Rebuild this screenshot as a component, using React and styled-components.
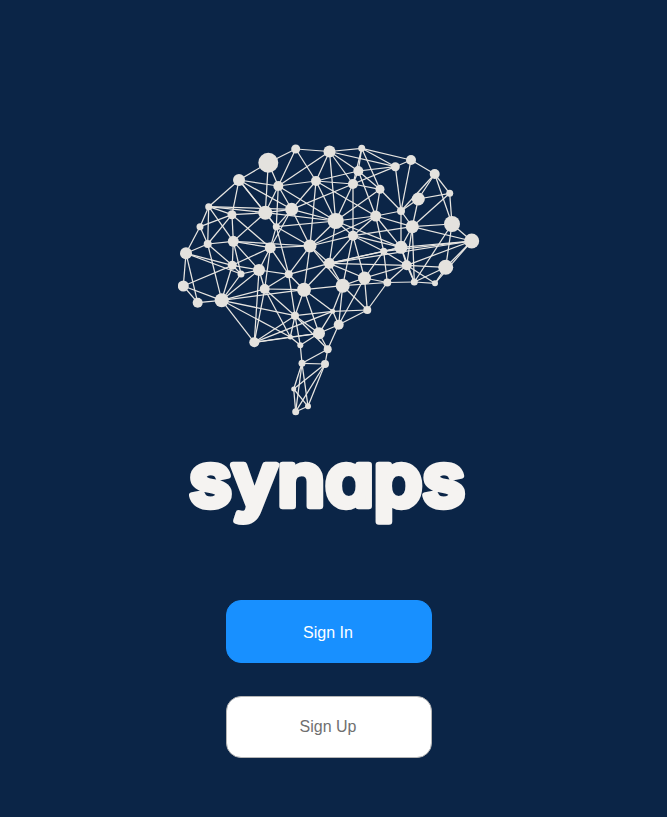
import React from 'react';
import styled, { createGlobalStyle } from 'styled-components';

const GlobalStyle = createGlobalStyle`
  html, body {
    margin: 0;
    padding: 0;
    background: #0b2547;
  }
`;

const Page = styled.main`
  display: flex;
  flex-direction: column;
  align-items: center;
  box-sizing: border-box;
  width: 658px;
  height: 817px;
  padding-top: 143px;
  overflow: hidden;
  font-family: 'Liberation Sans', Arial, sans-serif;
`;

const Brain = styled.svg`
  display: block;
  width: 302px;
  height: 274px;
  flex: none;
`;

const Wordmark = styled.svg`
  display: block;
  width: 400px;
  height: 110px;
  margin-top: 21px;
  flex: none;
  overflow: visible;

  text {
    font-family: Inter, 'Liberation Sans', sans-serif;
    font-size: 75px;
    font-weight: 600;
    font-feature-settings: 'cv11' 1;
    fill: #f5f3f1;
    stroke: #f5f3f1;
    stroke-width: 6.5px;
    stroke-linejoin: round;
  }
`;

const Actions = styled.div`
  display: flex;
  flex-direction: column;
  gap: 33px;
  margin-top: 52px;
`;

const Button = styled.button`
  box-sizing: border-box;
  width: 206px;
  height: ${({ $primary }) => ($primary ? '63px' : '62px')};
  padding: ${({ $primary }) => ($primary ? '2px 2px 0 0' : '0 2px 0 0')};
  border-radius: 15px;
  border: 1px solid ${({ $primary }) => ($primary ? '#1890ff' : '#b5b5b5')};
  background: ${({ $primary }) => ($primary ? '#1890ff' : '#ffffff')};
  color: ${({ $primary }) => ($primary ? '#ffffff' : '#707070')};
  font-family: inherit;
  font-size: 16px;
`;

// [x, y, r]
const nodes = [
  [268.3, 162.7, 10], [295.7, 149, 4.5], [329.5, 151.5, 6], [361.7, 148.3, 3.5], [411, 160, 5],
  [395.3, 166.7, 4.5], [358.3, 171, 5], [434.7, 174, 5], [239, 180, 6], [278.3, 186, 5],
  [316, 181, 5], [353, 184, 5], [380, 189.3, 4.5], [449.7, 193.3, 3.5], [418.3, 199, 6.5],
  [208.7, 206.7, 3.5], [232, 214.7, 4.5], [265.3, 212.7, 7], [291.7, 209.3, 6.5], [401, 211, 4],
  [335.7, 221, 8], [375.7, 216, 5.5], [412.3, 226.7, 6.5], [452, 224, 8], [200, 226.7, 3.5],
  [276.3, 226.7, 3.5], [471.7, 241, 7.5], [207.7, 244, 4], [233.3, 241.3, 5.5], [270.3, 247.7, 5.5],
  [310, 246, 6.5], [353, 235.7, 5], [401, 247.3, 6.5], [186, 253.3, 6], [383.7, 251.3, 3.5],
  [232.3, 265.3, 4.5], [241, 274, 3.5], [259, 270, 6], [288.7, 274.3, 4], [329.3, 263.3, 5.5],
  [406.7, 265.3, 5], [445.7, 267.3, 7.5], [183.3, 286, 5.5], [197.7, 302.7, 5], [221.7, 300.3, 7],
  [264.7, 289, 5], [304, 289.7, 7], [342.7, 285.7, 7], [364.5, 278, 6.5], [387.3, 282.5, 4],
  [414.3, 282, 3.5], [435, 283.3, 3], [332.7, 311.3, 2.5], [367.3, 310, 4], [295, 315.7, 4],
  [338.7, 324.7, 5], [319, 333.3, 6], [254.3, 342.3, 5], [290.3, 337, 2.5], [300.3, 345.3, 3],
  [327.7, 349.3, 4], [302, 363.3, 3.5], [325, 364, 4], [293.7, 389, 2.5], [308, 406.3, 3],
  [295.7, 411.7, 3.5],
];

const edges = `0-1 0-8 0-9 0-17 1-2 1-9 1-10 2-3 2-9 2-10 2-6 2-5 2-11 2-20 3-4 3-5 3-6 3-12 3-11
  4-5 4-7 4-19 5-6 5-11 5-19 6-10 6-11 6-12 6-21 7-13 7-14 7-19 7-23 8-9 8-15 8-16 8-17 8-25 8-18
  9-10 9-17 9-18 9-25 9-20 10-11 10-18 10-20 10-30 10-21 11-12 11-20 11-31 11-18 12-19 12-21 12-20
  13-14 13-22 13-23 14-19 14-22 15-16 15-17 15-18 15-24 15-27 15-28 16-17 16-24 16-27 16-28 16-29 17-18 17-20 17-28 17-25
  18-20 18-25 18-30 18-29 19-21 19-22 19-32 20-21 20-25 20-30 20-31 20-39 20-32 21-22 21-31 21-32 21-34 21-30
  22-23 22-26 22-32 22-31 22-50 22-40 23-26 23-41 23-50 24-27 24-33 25-29 25-30 25-38 26-32 26-34 26-41 26-40 26-51 26-39
  27-28 27-33 27-35 27-44 28-29 28-35 28-36 28-30 28-37 29-30 29-35 29-37 29-38 29-45 30-31 30-38 30-39 30-46 30-47
  31-32 31-34 31-39 31-48 31-47 32-34 32-39 32-40 32-50 33-35 33-42 33-43 33-36 34-39 34-40 34-48 34-49 35-36 35-37 35-44 35-42
  36-37 36-44 37-38 37-44 37-45 37-57 38-39 38-45 38-46 38-54 39-40 39-46 39-47 39-48 40-41 40-48 40-49 40-50 40-51 41-50 41-51
  42-43 42-44 43-44 44-45 44-46 44-54 44-57 44-58 45-46 45-54 45-57 45-58 46-47 46-52 46-54 46-56 47-48 47-52 47-53 47-55 47-49
  48-49 48-53 48-55 49-50 49-53 50-51 52-53 52-54 52-55 52-56 52-57 53-55 54-56 54-57 54-58 54-59 54-60 55-56 55-60 56-57 56-59 56-60 56-58
  57-58 58-59 59-61 60-61 60-62 61-62 61-63 61-64 61-65 62-63 62-64 62-65 63-64 63-65 64-65`
  .trim()
  .split(/\s+/)
  .map((pair) => pair.split('-').map(Number));

const BrainGraph = () => (
  <Brain viewBox="178 143 302 274" aria-hidden="true">
    <g stroke="#e8e6e2" strokeWidth="1.25">
      {edges.map(([a, b]) => (
        <line key={`${a}-${b}`} x1={nodes[a][0]} y1={nodes[a][1]} x2={nodes[b][0]} y2={nodes[b][1]} />
      ))}
    </g>
    <g fill="#e4e2de">
      {nodes.map(([x, y, r]) => (
        <circle key={`${x}-${y}`} cx={x} cy={y} r={r} />
      ))}
    </g>
  </Brain>
);

export default function App() {
  return (
    <>
      <GlobalStyle />
      <Page>
        <BrainGraph />
        <Wordmark viewBox="0 0 400 110">
          <text x="60" y="68" textLength="276" lengthAdjust="spacingAndGlyphs">synaps</text>
        </Wordmark>
        <Actions>
          <Button $primary>Sign In</Button>
          <Button>Sign Up</Button>
        </Actions>
      </Page>
    </>
  );
}
